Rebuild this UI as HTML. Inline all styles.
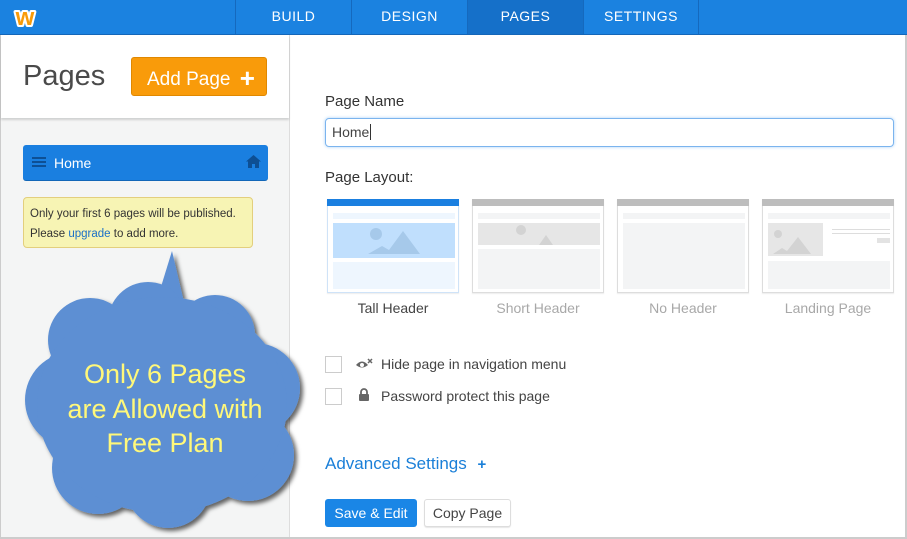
<!DOCTYPE html>
<html><head><meta charset="utf-8"><style>
*{box-sizing:border-box;margin:0;padding:0}
body{width:907px;height:539px;overflow:hidden;background:#fff;font-family:"Liberation Sans",sans-serif;position:relative;color:#333}
.a{position:absolute}
#top{left:0;top:0;width:907px;height:35px;background:#1b82e0;border-bottom:1px solid #1466b8}
.tab{top:0;height:34px;width:116px;border-left:1px solid #1569be;color:#fff;font-size:14px;letter-spacing:.5px;text-align:center;line-height:33px}
.card{top:199px;width:132px;height:94px;border:1px solid #ddd;border-top:none;background:#fff;box-shadow:0 1px 1px rgba(0,0,0,.08)}
.card .bar{position:absolute;left:-1px;right:-1px;top:0;height:7px;background:#bdbdbd}
.card .r{position:absolute;background:#f3f4f5}
.lbl{top:300px;width:132px;text-align:center;font-size:14px;color:#a8a8a8}
.cb{left:325px;width:17px;height:17px;border:1px solid #ccc;background:#fff}
</style></head><body>
<div id="top" class="a"></div>
<svg class="a" style="left:8px;top:3px" width="34" height="28"><text x="17" y="22" text-anchor="middle" font-family="Liberation Sans,sans-serif" font-weight="bold" font-size="24" fill="#f99b0a" stroke="#fff" stroke-width="4" paint-order="stroke" stroke-linejoin="round">w</text></svg>
<div class="a tab" style="left:235px">BUILD</div>
<div class="a tab" style="left:351px">DESIGN</div>
<div class="a tab" style="left:467px;background:#1570c9">PAGES</div>
<div class="a tab" style="left:583px;border-right:1px solid #1569be">SETTINGS</div>

<div class="a" style="left:0;top:35px;width:290px;height:504px;background:#f4f5f5;border-right:1px solid #ddd;border-left:1px solid #ccc"></div>
<div class="a" style="left:1px;top:35px;width:288px;height:83px;background:#fff;box-shadow:0 2px 2px rgba(0,0,0,.15)"></div>
<div class="a" style="left:23px;top:60px;font-size:29px;color:#4a4a4a">Pages</div>
<div class="a" style="left:131px;top:57px;width:136px;height:39px;background:#f99b0a;border:1px solid #e08800;border-radius:3px;color:#fff;font-size:19px;line-height:37px;padding-left:15px">Add Page <span style="font-size:26px;font-weight:bold;position:relative;top:2px;margin-left:4px">+</span></div>
<div class="a" style="left:23px;top:145px;width:245px;height:36px;background:#1a7fe0;border-radius:3px;border-bottom:1px solid #1267b8"></div>
<div class="a" style="left:32px;top:157px;width:14px;height:2px;background:#0d4f94;box-shadow:0 4px 0 #0d4f94,0 8px 0 #0d4f94"></div>
<div class="a" style="left:54px;top:155px;color:#fff;font-size:14px">Home</div>
<svg class="a" style="left:246px;top:155px" width="15" height="13" viewBox="0 0 15 13"><path d="M7.5 0L0 6.5h2V13h4V9h3v4h4V6.5h2z" fill="#0d4f94"/></svg>
<div class="a" style="left:23px;top:197px;width:230px;height:51px;background:#f7f4b4;border:1px solid #e3cf7d;border-radius:4px;font-size:11.5px;line-height:20px;padding:6px 0 0 6px;color:#333">Only your first 6 pages will be published.<br>Please <span style="color:#1a6fc7">upgrade</span> to add more.</div>

<svg class="a" style="left:0;top:245px" width="310" height="294" viewBox="0 245 310 294">
<defs><filter id="s" x="-10%" y="-10%" width="130%" height="130%"><feDropShadow dx="3" dy="3" stdDeviation="2" flood-color="#000" flood-opacity=".6"/></filter></defs>
<g fill="#5d8fd3" filter="url(#s)">
<path d="M172 251L160 290L184 302Z"/>
<circle cx="148" cy="322" r="40"/>
<circle cx="215" cy="335" r="40"/>
<circle cx="255" cy="388" r="45"/>
<circle cx="248" cy="455" r="46"/>
<circle cx="168" cy="485" r="43"/>
<circle cx="98" cy="468" r="46"/>
<circle cx="73" cy="400" r="48"/>
<circle cx="90" cy="340" r="42"/>
<ellipse cx="162" cy="405" rx="125" ry="108"/>
</g>
<g fill="#fff87a" font-family="Liberation Sans,sans-serif" font-size="27" text-anchor="middle">
<text x="165" y="383">Only 6 Pages</text>
<text x="165" y="418">are Allowed with</text>
<text x="165" y="452">Free Plan</text>
</g></svg>

<div class="a" style="left:325px;top:93px;font-size:15px;color:#333">Page Name</div>
<div class="a" style="left:325px;top:118px;width:569px;height:29px;border:1px solid #7bb4ee;border-radius:4px;box-shadow:0 0 3px #a8d0f7;font-size:14px;line-height:27px;padding-left:6px;color:#444">Home<span style="border-left:1px solid #333;margin-left:1px"></span></div>
<div class="a" style="left:325px;top:169px;font-size:15px;color:#333">Page Layout:</div>

<div class="a card" style="left:327px;border-color:#cfe3f8"><div class="bar" style="background:#1a7fe0"></div>
<div class="r" style="left:5px;top:14px;width:122px;height:6px;background:#eef6fe"></div>
<div class="r" style="left:5px;top:24px;width:122px;height:35px;background:#c0dffd"></div>
<div class="r" style="left:5px;top:63px;width:122px;height:27px;background:#eef6fe"></div>
<svg style="position:absolute;left:40px;top:26px" width="55" height="30"><circle cx="8" cy="9" r="6" fill="#a6c9ea"/><path d="M0 29L14 21L21 25L35 6L52 29Z" fill="#a6c9ea"/></svg></div>
<div class="a card" style="left:472px"><div class="bar"></div>
<div class="r" style="left:5px;top:14px;width:122px;height:6px"></div>
<div class="r" style="left:5px;top:24px;width:122px;height:22px;background:#e6e6e6"></div>
<div class="r" style="left:5px;top:50px;width:122px;height:40px"></div>
<svg style="position:absolute;left:40px;top:26px" width="55" height="20"><circle cx="8" cy="5" r="5" fill="#d3d3d3"/><path d="M26 20L33 10L40 20Z" fill="#d3d3d3"/></svg></div>
<div class="a card" style="left:617px"><div class="bar"></div>
<div class="r" style="left:5px;top:14px;width:122px;height:6px"></div>
<div class="r" style="left:5px;top:24px;width:122px;height:66px"></div></div>
<div class="a card" style="left:762px"><div class="bar"></div>
<div class="r" style="left:5px;top:14px;width:122px;height:6px"></div>
<div class="r" style="left:5px;top:24px;width:55px;height:33px;background:#e6e6e6"></div>
<svg style="position:absolute;left:8px;top:28px" width="50" height="28"><circle cx="7" cy="7" r="4" fill="#d3d3d3"/><path d="M2 27L11 21L16 24L27 10L40 27Z" fill="#d3d3d3"/></svg>
<div class="r" style="left:69px;top:30px;width:58px;height:1px;background:#ddd"></div>
<div class="r" style="left:69px;top:34px;width:58px;height:1px;background:#ddd"></div>
<div class="r" style="left:114px;top:39px;width:13px;height:5px;background:#e3e3e3"></div>
<div class="r" style="left:5px;top:62px;width:122px;height:28px"></div></div>
<div class="a lbl" style="left:327px;color:#444">Tall Header</div>
<div class="a lbl" style="left:472px">Short Header</div>
<div class="a lbl" style="left:617px">No Header</div>
<div class="a lbl" style="left:762px">Landing Page</div>

<div class="a cb" style="top:356px"></div>
<div class="a cb" style="top:388px"></div>
<svg class="a" style="left:355px;top:357px" width="18" height="14"><path d="M1 8Q7 1 13 8Q7 13 1 8Z" fill="#666"/><circle cx="7" cy="8" r="2" fill="#fff"/><path d="M13 2l4 4M17 2l-4 4" stroke="#666" stroke-width="1.5"/></svg>
<svg class="a" style="left:358px;top:388px" width="12" height="14"><path d="M3 6V4a3 3 0 016 0v2" stroke="#666" stroke-width="1.8" fill="none"/><rect x="1" y="6" width="10" height="7" rx="1" fill="#666"/></svg>
<div class="a" style="left:381px;top:356px;font-size:14px;color:#444">Hide page in navigation menu</div>
<div class="a" style="left:381px;top:388px;font-size:14px;color:#444">Password protect this page</div>
<div class="a" style="left:325px;top:454px;font-size:17px;color:#1a7fd8">Advanced Settings <span style="margin-left:6px;font-weight:bold;font-size:15px">+</span></div>
<div class="a" style="left:325px;top:499px;width:92px;height:28px;background:#1a86e6;border-radius:3px;color:#fff;font-size:14px;text-align:center;line-height:28px">Save &amp; Edit</div>
<div class="a" style="left:424px;top:499px;width:87px;height:28px;background:#fff;border:1px solid #ddd;border-radius:3px;box-shadow:0 1px 1px rgba(0,0,0,.1);color:#444;font-size:14px;text-align:center;line-height:26px">Copy Page</div>
<div class="a" style="left:0;top:537px;width:907px;height:2px;background:#ccc"></div>
<div class="a" style="left:905px;top:35px;width:2px;height:504px;background:#ccc"></div>
</body></html>
